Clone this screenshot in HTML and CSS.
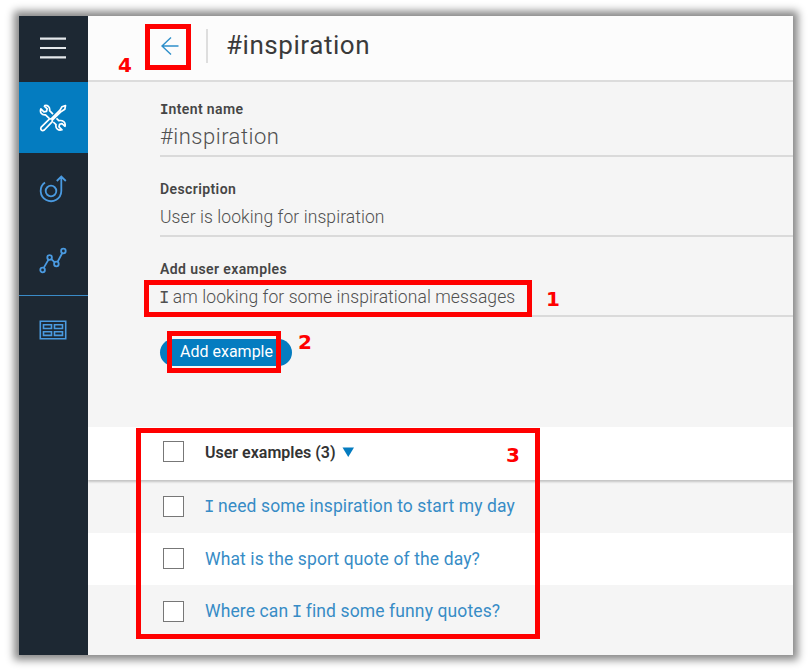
FILE: index.html
```html
<!DOCTYPE html>
<html lang="en">
<head>
<meta charset="utf-8">
<title>#inspiration</title>
<link rel="stylesheet" href="styles.css">
</head>
<body>
<div class="window">
  <nav class="sidebar">
    <a class="nav-item menu"><svg width="28" height="24" viewBox="0 0 28 24"><path d="M1 2.7h26M1 12h26M1 21.3h26" stroke="#e4e8eb" stroke-width="2.2"/></svg></a>
    <a class="nav-item active"><svg width="28" height="28" viewBox="0 0 28 28" fill="none" stroke="#fff" stroke-width="1.7" stroke-linejoin="round"><path d="M5 1.8l3.2 3-.7 2.5-2.6.6-3-3C.6 8 2.5 11.2 6.500 10.800L10.200 14.300M14 10.200L10.600 6.700C11.300 3 8.500.5 5 1.800M17.500 14.300L19.800 16.700C23.800 15.800 27 18.500 26 22.300L23 19.600 20.600 20.300 20 22.800 23 25.800C19.500 27.200 16.200 24.500 17 20.700L14.300 18"/><path d="M26.500 1.500L23 2.700 21 6.200 12 15 10.600 14.800 2.200 23.200C1 25.500 3 27.600 5.300 26L13.300 17.600 13.200 16.200 22.300 7.400 25.800 5.300z"/></svg></a>
    <a class="nav-item"><svg width="28" height="28" viewBox="0 0 28 28" fill="none" stroke="#4a9ae0" stroke-width="1.8"><circle cx="12" cy="16" r="5.300"/><path d="M6 7.500A10.300 10.300 0 1 0 22.300 16V2M17.800 6l4.500-4.500L26.800 6"/></svg></a>
    <a class="nav-item"><svg width="28" height="28" viewBox="0 0 28 28" fill="none" stroke="#4a9ae0" stroke-width="1.800"><circle cx="3.600" cy="24" r="2.300"/><circle cx="10.600" cy="11.500" r="2.300"/><circle cx="17.400" cy="18" r="2.300"/><circle cx="24.400" cy="5" r="2.300"/><path d="M4.700 21.900l4.800-8.300M12.300 13.100l3.500 3.300M18.500 16l4.800-9"/></svg></a>
    <a class="nav-item last"><svg width="28" height="20" viewBox="0 0 28 20" fill="none" stroke="#4a9ae0" stroke-width="1.600"><path d="M1.300 1.300h25.400v17.400H1.300zM4.500 4.800h8v3.700h-8zM15.500 4.800h8v3.700h-8zM4.500 11.700h8v3.700h-8zM15.500 11.700h8v3.700h-8z"/></svg></a>
  </nav>
  <main class="main">
    <header class="header">
      <svg class="back" width="18" height="18" viewBox="0 0 18 18" fill="none" stroke="#2e8fca" stroke-width="1.400"><path d="M17.500 9H1M10 .5L1 9l9 8.500"/></svg>
      <span class="divider"></span>
      <h1 class="title">#inspiration</h1>
    </header>
    <section class="form">
      <div class="field"><label class="label"><span class="slab">I</span>ntent name</label><div class="value value-name">#inspiration</div></div>
      <div class="field"><label class="label">Description</label><div class="value">User is looking for inspiration</div></div>
      <div class="field"><label class="label">Add user examples</label><div class="value"><span class="slab">I</span> am looking for some inspirational messages</div></div>
      <button class="add">Add example</button>
    </section>
    <section class="table">
      <div class="row head"><span class="check"></span><span class="head-text">User examples (3)</span><svg class="sort" width="13" height="10" viewBox="0 0 13 10"><path d="M.5.500h11.500L6.250 10z" fill="#047cc0"/></svg></div>
      <div class="row"><span class="check"></span><span class="link"><span class="slab">I</span> need some inspiration to start my day</span></div>
      <div class="row white"><span class="check"></span><span class="link">What is the sport quote of the day?</span></div>
      <div class="row"><span class="check"></span><span class="link">Where can <span class="slab">I</span> find some funny quotes?</span></div>
    </section>
  </main>
</div>
<div class="mark box1"></div><div class="mark box2"></div><div class="mark box3"></div><div class="mark box4"></div>
<span class="num num1">1</span><span class="num num2">2</span><span class="num num3">3</span><span class="num num4">4</span>
</body>
</html>
```
FILE: styles.css
```css
* { box-sizing: border-box; }
body { margin: 0; width: 810px; height: 670px; padding: 16px 0 0 19px; overflow: hidden; background: #fff; position: relative; font-family: Roboto, "Noto Sans", sans-serif; }
.window { display: flex; width: 774px; height: 639px; background: #f5f5f5; box-shadow: 0 0 8px 5px #888; }
.sidebar { width: 69px; flex: none; background: #1d2833; display: flex; flex-direction: column; }
.nav-item { height: 71px; display: flex; align-items: center; justify-content: center; flex: none; }
.nav-item svg { display: block; margin-right: 2px; margin-top: 0; }
.menu { height: 66px; }
.nav-item.menu svg { margin-top: -2px; }
.active { background: #047cc0; }
.last { border-top: 1px solid #3a8bc8; }
.nav-item.last svg { margin-top: -2px; }
.main { flex: 1; min-width: 0; overflow: hidden; }
.header { height: 66px; background: #fcfcfc; border-bottom: 2px solid #dcdcdc; display: flex; align-items: center; padding: 0 0 5px 73px; }
.back { flex: none; }
.divider { width: 2px; height: 34px; background: #dedede; margin: 0 18px 0 27px; }
.title { margin: -2px 0 0; font-size: 26px; font-weight: 400; color: #3a3a3a; letter-spacing: 0.55px; line-height: 34px; }
.form { height: 345px; padding: 18px 0 0 72px; }
.field { height: 57px; margin-bottom: 23px; border-bottom: 2px solid #dadada; white-space: nowrap; }
.label { display: block; height: 18px; line-height: 18px; font-size: 14px; font-weight: 600; color: #464646; letter-spacing: 0.4px; }
.value { height: 37px; line-height: 39px; font-size: 17.500px; font-weight: 300; color: #505050; letter-spacing: 0.08px; }
.value-name { font-size: 22px; letter-spacing: 0.5px; line-height: 37px; }
.slab { font-family: "Liberation Mono", monospace; letter-spacing: -1px; margin-left: -1px; }
.label .slab { letter-spacing: 0; margin-left: 0; }
.add { display: block; width: 132px; height: 27px; margin-top: -1px; border: 0; border-radius: 14px; padding: 0 0 2px 1px; background: #047cc0; color: #fff; font: 400 16px/24px Roboto, sans-serif; letter-spacing: 0; }
.row { height: 52.500px; display: flex; align-items: center; padding-left: 75px; position: relative; }
.head { height: 53px; background: #fff; box-shadow: 0 2px 2px #c4c4c4; padding-bottom: 5px; z-index: 1; }
.white { background: #fff; }
.check { width: 21px; height: 21px; border: 1px solid #777; background: #fff; flex: none; margin-right: 21px; }
.head-text { font-size: 16px; font-weight: 600; color: #333; margin-top: 2px; }
.sort { margin: 2px 0 0 6px; }
.link { font-size: 17.500px; color: #378cc6; letter-spacing: 0.12px; white-space: nowrap; margin-top: 0; }
.mark { position: absolute; border: 5px solid #f00; z-index: 2; }
.box1 { left: 144px; top: 280px; width: 388px; height: 37px; }
.box2 { left: 167px; top: 331px; width: 114px; height: 42px; }
.box3 { left: 136px; top: 428px; width: 404px; height: 211px; }
.box4 { left: 145px; top: 24px; width: 46px; height: 46px; }
.num { position: absolute; z-index: 3; color: #f00; font: bold 20px/20px "DejaVu Sans", sans-serif; }
.num1 { left: 546px; top: 289px; }
.num2 { left: 298px; top: 332px; }
.num3 { left: 506px; top: 445px; }
.num4 { left: 118px; top: 55px; }
```
